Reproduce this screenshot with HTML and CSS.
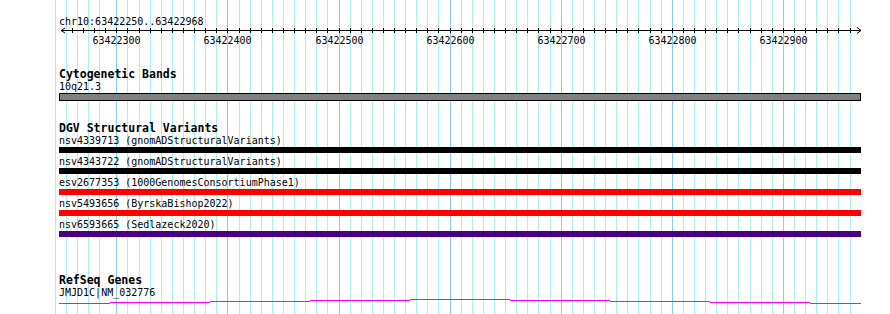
FILE: index.html
```html
<!DOCTYPE html>
<html lang="en">

<head>
  <meta charset="UTF-8">
  <meta name="viewport" content="width=device-width, initial-scale=1.0">
  <title>chr10:63422250..63422968</title>
  <link rel="stylesheet" href="styles.css">
</head>

<body>
  <div class="browser">
    <div class="grid" id="grid"></div>

    <div class="ruler">
      <div class="locus">chr10:63422250..63422968</div>
      <svg class="scale" id="scale" width="890" height="7"></svg>
      <div class="scale-labels" id="labels"></div>
    </div>

    <div class="track track-cyto">
      <div class="track-label">Cytogenetic Bands</div>
      <div class="feature-name">10q21.3</div>
      <div class="band"></div>
    </div>

    <div class="track track-dgv">
      <div class="track-label">DGV Structural Variants</div>
      <div class="feature">
        <div class="feature-name">nsv4339713 (gnomADStructuralVariants)</div>
        <div class="bar bar-loss"></div>
      </div>
      <div class="feature">
        <div class="feature-name">nsv4343722 (gnomADStructuralVariants)</div>
        <div class="bar bar-loss"></div>
      </div>
      <div class="feature">
        <div class="feature-name">esv2677353 (1000GenomesConsortiumPhase1)</div>
        <div class="bar bar-del"></div>
      </div>
      <div class="feature">
        <div class="feature-name">nsv5493656 (ByrskaBishop2022)</div>
        <div class="bar bar-del"></div>
      </div>
      <div class="feature">
        <div class="feature-name">nsv6593665 (Sedlazeck2020)</div>
        <div class="bar bar-inv"></div>
      </div>
    </div>

    <div class="track track-genes">
      <div class="track-label">RefSeq Genes</div>
      <div class="feature-name">JMJD1C|NM_032776</div>
      <svg class="gene" id="gene" width="802" height="5"></svg>
    </div>
  </div>

  <script>
    // 1 bp = 1.111 px, 63422300 sits at x = 116.3
    const originX = 116.3;
    const step = 11.11;
    const svgNS = 'http://www.w3.org/2000/svg';

    function xAt(k) {
      return Math.round(originX + k * step);
    }

    // grid lines
    const grid = document.getElementById('grid');
    function addGridLine(x, major) {
      const line = document.createElement('div');
      line.className = major ? 'gridline major' : 'gridline';
      line.style.left = x + 'px';
      grid.appendChild(line);
    }
    [55, 66, 77, 88, 99].forEach(x => addGridLine(x, false));
    for (let k = 0; k <= 66; k++) {
      addGridLine(xAt(k), k % 10 === 0);
    }

    // scale bar
    const scale = document.getElementById('scale');
    function svgEl(name, attrs) {
      const el = document.createElementNS(svgNS, name);
      for (const key in attrs) el.setAttribute(key, attrs[key]);
      scale.appendChild(el);
      return el;
    }
    svgEl('line', { x1: 61, y1: 2.5, x2: 861, y2: 2.5 });
    svgEl('polyline', { points: '65,0 61,2.5 65,5', fill: 'none' });
    svgEl('polyline', { points: '857,-0.5 861,2.5 857,5.5', fill: 'none' });
    for (let k = -4; k <= 66; k++) {
      const x = xAt(k) + 0.5;
      svgEl('line', { x1: x, y1: 0, x2: x, y2: 5 });
    }

    // scale labels
    const labels = document.getElementById('labels');
    for (let i = 0; i < 7; i++) {
      const label = document.createElement('span');
      label.className = 'scale-label';
      label.textContent = 63422300 + i * 100;
      label.style.left = (xAt(i * 10) + 0.5) + 'px';
      labels.appendChild(label);
    }

    // gene model: one segment per 100 px, y offset in px
    const gene = document.getElementById('gene');
    const segments = [[0, 51, 4], [51, 151, 3], [151, 251, 2], [251, 351, 1], [351, 451, 0],
      [451, 551, 1], [551, 651, 2], [651, 751, 3], [751, 802, 4]];
    segments.forEach(([from, to, y]) => {
      const rect = document.createElementNS(svgNS, 'rect');
      rect.setAttribute('x', from);
      rect.setAttribute('y', y);
      rect.setAttribute('width', to - from);
      rect.setAttribute('height', 1);
      gene.appendChild(rect);
    });
  </script>
</body>

</html>
```

FILE: styles.css
```css
body {
  margin: 0;
  background: #ffffff;
  font-family: 'DejaVu Sans Mono', 'Liberation Mono', monospace;
  font-size: 10px;
  color: #000000;
}

.browser {
  position: relative;
  width: 890px;
  height: 314px;
  overflow: hidden;
  padding-top: 16px;
  box-sizing: border-box;
}

.grid {
  position: absolute;
  top: 0;
  bottom: 0;
  left: 0;
  right: 0;
}

.gridline {
  position: absolute;
  top: 0;
  bottom: 0;
  width: 1px;
  background: #aeeeee;
}

.gridline.major {
  background: #88cdea;
}

.ruler,
.track {
  position: relative;
}

.locus {
  height: 12px;
  line-height: 12px;
  padding-left: 59px;
}

.scale {
  display: block;
  overflow: visible;
  shape-rendering: crispEdges;
}

.scale line,
.scale polyline {
  stroke: #000000;
  stroke-width: 1;
}

.scale polyline {
  shape-rendering: auto;
}

.scale-labels {
  position: relative;
  height: 12px;
  line-height: 12px;
}

.scale-label {
  position: absolute;
  top: 0;
  transform: translateX(-50%);
}

.track {
  padding-left: 59px;
}

.track-label {
  font-weight: bold;
  font-size: 11.5px;
  height: 12px;
  line-height: 12px;
}

.feature-name {
  height: 13px;
  line-height: 13px;
  white-space: nowrap;
}

.track-cyto {
  margin-top: 21px;
}

.band {
  width: 800px;
  height: 6px;
  background: #808080;
  border: 1px solid #000000;
}

.track-dgv {
  margin-top: 21px;
}

.feature {
  height: 21px;
}

.bar {
  width: 802px;
  height: 6px;
}

.bar-loss {
  background: #000000;
}

.bar-del {
  background: #ff0000;
}

.bar-inv {
  background: #4b0082;
}

.track-genes {
  margin-top: 35px;
}

.gene {
  display: block;
}

.gene rect {
  fill: #ff00ff;
}
```
